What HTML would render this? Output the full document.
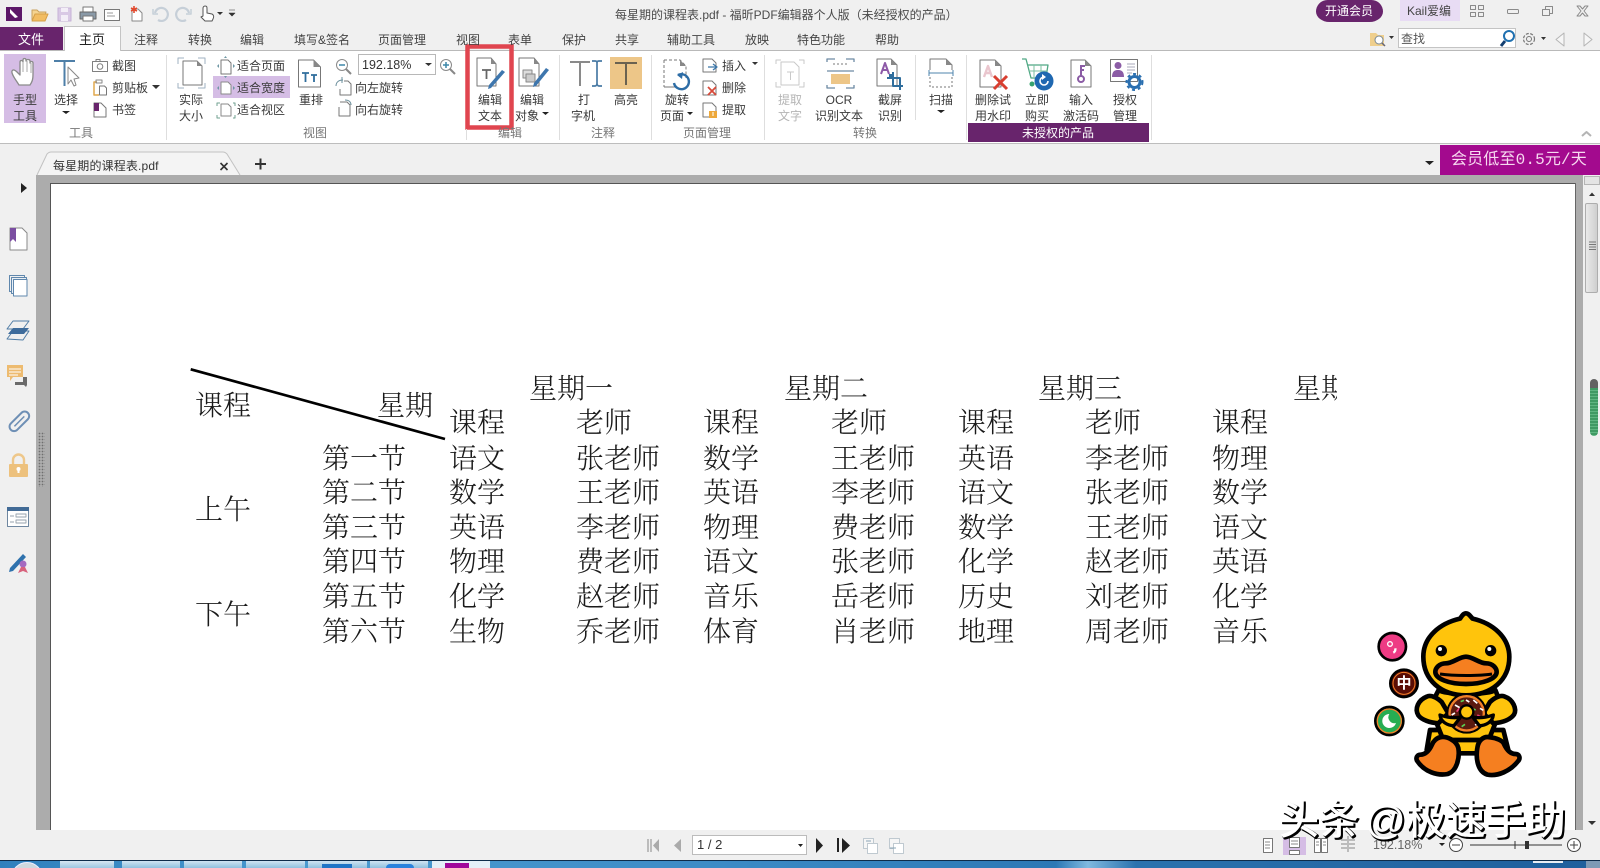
<!DOCTYPE html>
<html lang="zh"><head><meta charset="utf-8"><title>每星期的课程表.pdf - 福昕PDF编辑器个人版</title>
<style>
html,body{margin:0;padding:0;width:1600px;height:868px;overflow:hidden;background:#f0f0f0}
body{position:relative;font-family:"Liberation Sans","Noto Sans CJK SC",sans-serif;font-size:12px;color:#3a3a3a}
.b{position:absolute}
.t{position:absolute;white-space:nowrap;line-height:16px}
.c{transform:translateX(-50%)}
.g{color:#777}
.tab{font-size:12px;color:#444}
.d{position:absolute;white-space:nowrap;line-height:34px;margin-top:1px;font-family:"Liberation Serif","Noto Serif CJK SC",serif;font-size:28px;color:#1a1a1a;font-weight:300}
.m{position:absolute;white-space:nowrap;font-family:"Liberation Sans","Noto Sans CJK SC",sans-serif;font-size:40px;line-height:46px;font-weight:500;color:#fff;text-shadow:2px 2px 0 #000,1px 2px 0 #000,2px 1px 0 #000}
svg{position:absolute;left:0;top:0}
</style></head><body>

<!-- structure -->
<div class="b" style="left:0;top:27px;width:63px;height:24px;background:#68246c"></div>
<div class="b" style="left:0;top:50px;width:1600px;height:1px;background:#b9b9b9"></div>
<div class="b" style="left:64px;top:26px;width:57px;height:25px;background:#fff;border:1px solid #c4c4c4;border-bottom:0;box-sizing:border-box"></div>
<div class="b" style="left:0;top:51px;width:1600px;height:92px;background:#fff"></div>
<div class="b" style="left:0;top:143px;width:1600px;height:1px;background:#bdbdbd"></div>
<div class="b" style="left:36px;top:175px;width:1547px;height:659px;background:#acacac"></div>
<div class="b" style="left:50px;top:183px;width:1525px;height:647px;background:#fff;border-left:1px solid #555;border-top:1px solid #555;box-sizing:border-box"></div>
<div class="b" style="left:1575px;top:183px;width:1px;height:647px;background:#666"></div>
<div class="b" style="left:36px;top:830px;width:1564px;height:30px;background:#f0f0f0"></div>
<div class="b" style="left:1583px;top:175px;width:17px;height:655px;background:#f0f0f0"></div>
<div class="b" style="left:1584px;top:176px;width:16px;height:9px;background:#e4e4e4;border:1px solid #b5b5b5;box-sizing:border-box"></div>
<div class="b" style="left:1585px;top:203px;width:13px;height:90px;background:linear-gradient(90deg,#e9e9e9,#cfcfcf);border:1px solid #adadad;border-radius:2px;box-sizing:border-box"></div>
<div class="b" style="left:1590px;top:379px;width:8px;height:57px;background:repeating-linear-gradient(#3f9a63 0 2px,#5fb581 2px 3px);border-radius:4px;border-top:9px solid #626262;box-sizing:border-box"></div>
<div class="b" style="left:38px;top:432px;width:7px;height:55px;background-image:radial-gradient(#6f6f6f 35%,transparent 40%);background-size:3px 3px"></div>

<!-- highlights -->
<div class="b" style="left:4px;top:54px;width:42px;height:69px;background:#d5bde5"></div>
<div class="b" style="left:213px;top:76px;width:77px;height:22px;background:#d5bde5"></div>
<div class="b" style="left:610px;top:57px;width:32px;height:32px;background:#edc688"></div>
<div class="b" style="left:968px;top:123px;width:181px;height:19px;background:#68246c"></div>
<div class="b" style="left:358px;top:54px;width:78px;height:21px;border:1px solid #b8b8b8;box-sizing:border-box;background:#fff"></div>
<div class="b" style="left:1398px;top:28px;width:118px;height:20px;border:1px solid #c4c4c4;box-sizing:border-box;background:#fff"></div>
<div class="b" style="left:1316px;top:0;width:67px;height:22px;background:#68246c;border-radius:0 0 14px 14px/0 0 11px 11px;border-top-left-radius:12px;border-top-right-radius:12px"></div>
<div class="b" style="left:1400px;top:0;width:60px;height:21px;background:#e8dcf4"></div>
<div class="b" style="left:1440px;top:145px;width:160px;height:30px;background:#a30a8e"></div>
<div class="b" style="left:692px;top:835px;width:115px;height:20px;border:1px solid #bcbcbc;box-sizing:border-box;background:#fff"></div>
<div class="b" style="left:1283px;top:837px;width:23px;height:18px;background:#d5bde5"></div>

<!-- taskbar -->
<div class="b" style="left:0;top:860px;width:1600px;height:8px;background:linear-gradient(90deg,#2f80bd 0,#4b9bd0 20%,#3c8bc6 45%,#2c78b5 66%,#7fb9e0 68%,#2a72ae 71%,#1e5f9c 100%);border-top:1px solid #0e2c4a;box-sizing:border-box"></div>
<div class="b" style="left:60px;top:861px;width:54px;height:7px;background:linear-gradient(#d6e6f1,#9cc6e0)"></div>
<div class="b" style="left:122px;top:861px;width:58px;height:7px;background:linear-gradient(#cfe4f2,#8fc0de)"></div>
<div class="b" style="left:184px;top:861px;width:58px;height:7px;background:linear-gradient(#cfe4f2,#8fc0de)"></div>
<div class="b" style="left:246px;top:861px;width:59px;height:7px;background:linear-gradient(#cfe4f2,#8fc0de)"></div>
<div class="b" style="left:308px;top:861px;width:59px;height:7px;background:linear-gradient(#cfe4f2,#8fc0de)"></div>
<div class="b" style="left:370px;top:861px;width:58px;height:7px;background:linear-gradient(#cfe4f2,#8fc0de)"></div>
<div class="b" style="left:432px;top:861px;width:58px;height:7px;background:#e4f0f8"></div>
<div class="b" style="left:445px;top:863px;width:24px;height:5px;background:#a0089a"></div>
<div class="b" style="left:322px;top:864px;width:30px;height:4px;background:#1f74c6"></div>
<div class="b" style="left:386px;top:864px;width:28px;height:4px;background:#2a82dc;border-radius:4px 4px 0 0"></div>
<div class="b" style="left:11px;top:862px;width:30px;height:30px;border-radius:50%;background:#cfd8de;border:1px solid #eef"></div>
<div class="b" style="left:1586px;top:861px;width:14px;height:7px;background:#7d9ab5"></div>
<div class="b" style="left:1533px;top:861px;width:30px;height:2px;background:#e8eef4"></div>

<!-- icons -->
<svg width="1600" height="868" viewBox="0 0 1600 868" fill="none" stroke-linejoin="round">
<!-- quick access -->
<rect x="6" y="7" width="16" height="14" fill="#5c1768"/><path d="M10 9l8 8-3 1-5-5z" fill="#fff"/>
<path d="M32 20V10h5l2 2h7l-1 3" stroke="#c9a15c" fill="#f5d490"/><path d="M32 21l3-7h13l-3 7z" fill="#f2bd62" stroke="#d59f48"/>
<rect x="58" y="8" width="13" height="13" fill="#d9c9e5" stroke="#c6b2d6"/><rect x="61" y="8" width="7" height="4" fill="#f3eef7"/><rect x="61" y="15" width="7" height="6" fill="#f3eef7"/>
<rect x="83" y="7" width="10" height="5" fill="#fff" stroke="#777"/><rect x="80" y="12" width="16" height="7" fill="#8a9aa8" stroke="#666"/><rect x="83" y="16" width="10" height="5" fill="#fff" stroke="#777"/>
<rect x="104.500" y="9.500" width="15" height="11" fill="#fff" stroke="#777"/><path d="M107 13h6M107 16h8" stroke="#999"/>
<path d="M132 9h6l4 4v8h-10z" fill="#fff" stroke="#888"/><path d="M134 6v7M131 8l6 3M137 8l-6 3" stroke="#e2492d" stroke-width="1.600"/>
<path d="M155 13a6.500 6.500 0 1 1 3 7" stroke="#c6cfd8" stroke-width="2.200"/><path d="M153 9v5h5" stroke="#c6cfd8" stroke-width="1.500"/>
<path d="M189 13a6.500 6.500 0 1 0-3 7" stroke="#c6cfd8" stroke-width="2.200"/><path d="M191 9v5h-5" stroke="#c6cfd8" stroke-width="1.500"/>
<path d="M205 6c2 0 2 1 2 3v4l5 1c2 1 2 3 1 5l-1 2h-7l-4-4 2-1V8c0-1 1-2 2-2z" fill="#fff" stroke="#555"/>
<path d="M217 12h6l-3 3z" fill="#333"/><path d="M229 10h6M229 13h6l-3 3z" fill="#333" stroke="#333" stroke-width=".6"/>
<!-- win controls -->
<g stroke="#8a8a8a"><rect x="1470.500" y="5.500" width="5" height="4"/><rect x="1478.500" y="5.500" width="5" height="4"/><rect x="1470.500" y="12.500" width="5" height="4"/><rect x="1478.500" y="12.500" width="5" height="4"/>
<rect x="1507.500" y="9.500" width="11" height="4" rx="1"/><rect x="1545.500" y="6.500" width="7" height="7"/><rect x="1542.500" y="9.500" width="7" height="6" fill="#f0f0f0"/>
<path d="M1577 6h3l2.500 3 2.500-3h3l-4 5 4 5h-3l-2.500-3-2.500 3h-3l4-5z" fill="#f0f0f0"/></g>
<!-- search row -->
<path d="M1370 33h6l2 2h6v11h-14z" fill="#efcf8d"/><circle cx="1379" cy="40" r="4" fill="#fff" stroke="#7c8a96"/><path d="M1382 43l3 3" stroke="#667" stroke-width="1.500"/>
<path d="M1389 36h5l-2.500 3zM1541 37h5l-2.500 3z" fill="#333"/>
<circle cx="1509" cy="36" r="5" stroke="#1f70b0" stroke-width="2"/><path d="M1505 41l-4 5" stroke="#123e70" stroke-width="3"/>
<circle cx="1529" cy="39" r="5.500" stroke="#777" stroke-width="1.200" stroke-dasharray="3 1.500"/><circle cx="1529" cy="39" r="2.500" stroke="#777"/>
<path d="M1564 33l-8 6.500 8 6.500zM1584 33l8 6.500-8 6.500z" stroke="#b5b5b5" fill="#f6f6f6"/>
<!-- hand -->
<path d="M19 85c-3-5-8-11-7-14 1-2 3-1 5 1l3 3V62c0-2 3-2 3 0v-2c0-2 3-2 3 0v1c0-2 4-2 4 0v2c0-2 3-2 3 0v11c0 6-1 8-3 11z" fill="#fff" stroke="#8b8b8b" stroke-width="1.300"/>
<path d="M23 62v10M27 61v11M31 63v10" stroke="#a9a9a9"/>
<!-- select -->
<path d="M54 61h21M64.500 61v25" stroke="#4e7fa8" stroke-width="2"/><path d="M68 67l11 11-5 1 2 6-2 1-3-6-3 4z" fill="#fff" stroke="#888"/>
<!-- snip, clipboard, bookmark -->
<rect x="92.500" y="61.500" width="15" height="10" stroke="#808080"/><circle cx="100" cy="66.500" r="2.800" stroke="#808080"/><path d="M96 61v-1.500h4V61" stroke="#808080"/>
<path d="M97 82h-3v13h5" stroke="#e0a84f" stroke-width="1.500"/><rect x="96" y="80" width="6" height="3" stroke="#888"/><path d="M99.500 86h5l2 2v7h-7z" fill="#fff" stroke="#777"/>
<path d="M94 103h7l5 5v9H94z" fill="#fff" stroke="#777"/><path d="M94 103h5v8H94z" fill="#68246c"/>
<path d="M152 85h8l-4 4zM425 63h7l-3.500 3zM752 62h6l-3 3z" fill="#333"/>
<path d="M62 111h8l-4 3zM542 112h7l-3.500 3zM687 112h6l-3 3zM937 110h8l-4 3zM1425 161h9l-4.500 4zM1439 843h6l-3 3zM798 844h5l-2.500 3z" fill="#222"/>
<!-- actual size -->
<path d="M178 64v-6h6M198 58h7v6M178 83v5h6M205 83v5h-7" stroke="#9fb2c2"/><path d="M183 61h14l5 5v19h-19z" fill="#fff" stroke="#777"/><path d="M197 61l5 5h-5z" fill="#888"/>
<!-- fit -->
<g stroke="#8a8a8a" fill="#fff"><path d="M221 60h7l3 3v11h-10z" stroke="#777"/><path d="M221 82h7l3 3v9h-10z"/><path d="M221 104h7l3 3v9h-10z"/></g>
<path d="M224 58l1.500-2 1.500 2zM224 76l1.500 2 1.500-2zM219 64l-2 2 2 2zM233 64l2 2-2 2zM219 86l-2 2 2 2zM233 86l2 2-2 2z" fill="#6f98a5"/>
<path d="M217 106v-3h3M233 103h2v3M217 115v3h3M233 118h2v-3" stroke="#72a090"/>
<!-- reflow -->
<path d="M298.500 60h15l7 7v20h-22z" fill="#fff" stroke="#777"/><path d="M313.500 60l7 7h-7z" fill="#888"/><path d="M302 73h7M305.500 73v9M311 75h6M314 75v7" stroke="#2f6d9c" stroke-width="1.800"/>
<!-- zoom -->
<circle cx="342" cy="65" r="5.500" fill="#fff" stroke="#8a8a8a"/><path d="M339 65h6" stroke="#3d87a8" stroke-width="1.500"/><path d="M346 69l5 5" stroke="#888" stroke-width="2"/>
<circle cx="446" cy="65" r="5.500" fill="#fff" stroke="#8a8a8a"/><path d="M443 65h6M446 62v6" stroke="#3d87a8" stroke-width="1.500"/><path d="M450 69l5 5" stroke="#888" stroke-width="2"/>
<!-- rotate -->
<path d="M344 81h4l3 3v11h-11v-6" fill="#fff" stroke="#777"/><path d="M336 86c0-4 3-6 7-6" stroke="#6b8f9c"/><path d="M342 77v6" stroke="#6b8f9c"/>
<path d="M340 102h7l3 3v11h-11v-9" fill="#fff" stroke="#777"/><path d="M351 105c0-3-2-5-6-5" stroke="#6b8f9c"/>
<!-- edit text -->
<path d="M477 58h14l5 6v22h-19z" fill="#fff" stroke="#777"/><path d="M491 58l5 6h-5z" fill="#888"/><path d="M482 70h9M486.500 70v9" stroke="#666" stroke-width="1.800"/>
<path d="M505 72l-14 16-3 1 1-4 13-15z" fill="#3e76ad"/>
<rect x="467.500" y="46.500" width="44" height="81" stroke="#e0454f" stroke-width="4.500" stroke-linejoin="miter"/>
<!-- edit object -->
<path d="M519 58h15l5 6v22h-20z" fill="#fff" stroke="#777"/><path d="M534 58l5 6h-5z" fill="#888"/><rect x="523" y="70" width="9" height="8" fill="#ddd" stroke="#888"/><rect x="526" y="74" width="9" height="8" fill="#ccc" stroke="#888"/>
<path d="M549 70l-13 16-3 1 1-4 12-15z" fill="#3e76ad"/>
<!-- typewriter -->
<path d="M570 62h20M580 62v24" stroke="#8a8a8a" stroke-width="2"/><path d="M592 61h3c1 0 2 0 2 2v20c0 2-1 3-2 3h-3M602 61h-3c-1 0-2 0-2 2v20c0 2 1 3 2 3h3" stroke="#4a7ba5" stroke-width="1.700"/>
<path d="M615 63h22M626 63v22" stroke="#6a6250" stroke-width="2"/>
<!-- rotate page -->
<path d="M664 60h16l6 6v12M677 87h-13z" stroke="#777" stroke-dasharray="3 2"/><path d="M664 60v27" stroke="#777" stroke-dasharray="3 2"/><path d="M680 60l6 6h-6z" fill="#888"/>
<path d="M678 75a7.500 7.500 0 1 1-4 8" stroke="#2d6da6" stroke-width="2.400"/><path d="M683 72l-6 3 5 4z" fill="#2d6da6"/>
<!-- page mgmt small -->
<path d="M703 59h9l4 4v9h-13z" fill="#fff" stroke="#777"/><path d="M708 67h9M713 64l4 3-4 3" stroke="#3b76a8" stroke-width="1.300"/>
<path d="M703 81h9l4 4v10h-13z" fill="#fff" stroke="#777"/><path d="M708 87l8 8M716 87l-8 8" stroke="#d84a3a" stroke-width="1.800"/>
<path d="M703 103h9l4 4v10h-13z" fill="#fff" stroke="#777"/><rect x="709" y="111" width="8" height="7" fill="#eda83b"/><path d="M713 112v4" stroke="#fff"/>
<!-- extract text -->
<g stroke="#c9c9c9"><path d="M776 64v-4h5M799 60h5v4M776 82v5h5M804 82v5h-5"/><path d="M781 62h13l5 5v18h-18z" fill="#fff"/><path d="M787 72h7M790.500 72v8"/></g>
<!-- OCR -->
<path d="M827 62v-3h8M846 59h8v3M827 85v3h8M846 88h8v-3" stroke="#6d8aa3" stroke-width="1.300"/><path d="M833 64h16" stroke="#777" stroke-dasharray="2 2"/><path d="M827 71h27" stroke="#6d8aa3" stroke-width="1.300"/><rect x="831" y="74" width="19" height="10" fill="#edc688"/>
<!-- screenshot OCR -->
<path d="M877 59h14l6 6v21h-20z" fill="#fff" stroke="#777"/><path d="M891 59l6 6h-6z" fill="#888"/><path d="M881 74l4-11 4 11M882.500 70h5" stroke="#8d5aa7" stroke-width="2"/>
<path d="M893 72v14h10M887 78h13v12" stroke="#2f6d9c" stroke-width="2"/><rect x="889" y="74" width="4" height="4" fill="#2f6d9c"/>
<!-- scan -->
<path d="M930 70V59h16l6 6v5" stroke="#777"/><path d="M946 59l6 6h-6z" fill="#888"/><path d="M929 73h24M929 70v6M953 70v6" stroke="#4f84ad"/><path d="M930 77v10h22V77" stroke="#777" stroke-dasharray="2 2"/>
<!-- delete watermark -->
<path d="M980 60h15l6 6v21h-21z" fill="#fff" stroke="#777"/><path d="M995 60l6 6h-6z" fill="#888"/><path d="M984 77l4-11 4 11M985 73h6" stroke="#eac6ce" stroke-width="2.400"/><path d="M994 76l13 13M1007 76l-13 13" stroke="#d83e30" stroke-width="3"/>
<!-- cart -->
<path d="M1022 59h4l5 19h17M1028 65h20l-2 12" stroke="#4fa884" stroke-width="1.300"/><path d="M1034 65v12M1041 65v12M1029 71h18" stroke="#7cc0a1"/><circle cx="1032" cy="84" r="2.500" fill="#36a26f"/>
<circle cx="1044" cy="81" r="9.500" fill="#1f68b1"/><path d="M1048 81a4 4 0 1 1-4-4" stroke="#fff" stroke-width="1.600"/><path d="M1042 74v6l4-3z" fill="#fff"/>
<!-- key -->
<path d="M1071 60h14l6 6v21h-20z" fill="#fff" stroke="#777"/><path d="M1085 60l6 6h-6z" fill="#888"/><circle cx="1081" cy="79" r="3" stroke="#8b5ca5" stroke-width="2"/><path d="M1081 76V65M1081 66h4M1081 70h3" stroke="#8b5ca5" stroke-width="2"/>
<!-- license -->
<rect x="1110.500" y="59.500" width="27" height="22" fill="#fff" stroke="#777"/><circle cx="1118" cy="65.500" r="3.500" fill="#8b5ca5"/><path d="M1112 77c0-6 3-7 6-7s6 1 6 7z" fill="#8b5ca5"/><path d="M1127 64h8M1127 67h8M1127 70h8M1127 73h5" stroke="#aab"/>
<circle cx="1134.500" cy="82" r="5.500" stroke="#2a6fb0" stroke-width="3"/><circle cx="1134.500" cy="82" r="8" stroke="#2a6fb0" stroke-width="2" stroke-dasharray="3 3"/>
<!-- separators -->
<path d="M166.500 55v85M466.500 129v11M559.500 55v85M651.500 55v85M764.500 55v85M915.500 55v65M966.500 55v85M1151.500 55v85" stroke="#dedede"/>
<path d="M1582 136l4.500-4 4.500 4" stroke="#b4b4b4" stroke-width="2"/>
<!-- tab -->
<path d="M37 175l10-21c1-1 2-2 4-2h172c2 0 3 1 4 2l13 21" fill="#f4f4f4" stroke="#c2c2c2"/>
<path d="M220.500 163l7 7M227.500 163l-7 7" stroke="#333" stroke-width="1.600"/>
<path d="M255 164h11M260.500 158.500v11" stroke="#333" stroke-width="2"/>
<!-- sidebar -->
<path d="M21 183l6 5-6 5z" fill="#222"/>
<path d="M10 228h12l5 5v17H10z" fill="#fff" stroke="#8a8a8a"/><path d="M10 228h6v14l-3-3-3 3z" fill="#7b4ea1"/>
<rect x="9.500" y="275.500" width="15" height="16" stroke="#5f87ad"/><rect x="11.500" y="277.500" width="15" height="16" fill="#e9eff5" stroke="#5f87ad"/><rect x="13.500" y="279.500" width="13.500" height="16.500" fill="#fff" stroke="#5f87ad"/>
<path d="M7 339l6-8h16l-6 9z" stroke="#517da6"/><path d="M7 329l6-8h16l-6 8z" stroke="#517da6"/><path d="M13 328h16l-5 6H8z" fill="#3e6c9c"/>
<path d="M7 365h16v12H13l-3 4v-4H7z" fill="#edbb70"/><path d="M9 369h12M9 372h12M9 375h9" stroke="#fff"/><path d="M15 382h8v-5h4v8l-1 2-2-2H15z" fill="#6a6a6a"/>
<g transform="rotate(-45 19 421)"><rect x="7" y="417" width="24" height="9" rx="4.500" stroke="#6e8fb5" stroke-width="2"/><path d="M12 421.500h14" stroke="#6e8fb5" stroke-width="1.500"/></g>
<path d="M13 465v-5a5.500 5.500 0 0 1 11 0v5" stroke="#eec78a" stroke-width="2.400"/><rect x="9" y="464" width="19" height="13" rx="1" fill="#edc17d"/><circle cx="18.500" cy="469" r="2" fill="#fff"/><path d="M17.500 470h2v3h-2z" fill="#fff"/>
<rect x="7.500" y="507.500" width="21" height="19" fill="#fff" stroke="#6f87a0"/><rect x="7" y="507" width="22" height="4" fill="#426b96"/><path d="M10 516h4M16 514h10v3H16zM10 522h4M16 520h10v3H16z" stroke="#96a2ac" stroke-width=".9"/>
<path d="M9 572l1-4 13-14 3 3-13 14z" fill="#2f72ad"/><circle cx="23" cy="564" r="3.500" fill="#a56ac0"/><path d="M18 573l3-6h4l3 6-5-2z" fill="#d8627c"/>
<!-- scrollbar -->
<path d="M1589 196l3-3.500 3 3.500z" fill="#333"/><path d="M1588 821h8l-4 4z" fill="#333"/>
<path d="M1589 242h7M1589 244.500h7M1589 247h7M1589 249.500h7" stroke="#777"/>
<!-- diagonal -->
<path d="M190.700 369.300L445 439" stroke="#000" stroke-width="2.700"/>
<!-- page nav -->
<path d="M648 839v13M651 839v13" stroke="#aaa" stroke-width="1.500"/><path d="M659 839l-6 6.500 6 6.500z" fill="#aaa"/><path d="M681 839l-7 6.500 7 6.500z" fill="#aaa"/>
<path d="M816 838l7 7.500-7 7.500z" fill="#222"/><path d="M838 838v14" stroke="#222" stroke-width="2"/><path d="M842 838l8 7.500-8 7.500z" fill="#222"/>
<rect x="863.500" y="838.500" width="10" height="10" stroke="#bfc9d0" fill="#f6f6f6"/><rect x="867.500" y="843.500" width="10" height="10" stroke="#bfc9d0" fill="#fff"/><path d="M866 841h5" stroke="#8aa4b5"/>
<rect x="889.500" y="838.500" width="10" height="10" stroke="#bfc9d0" fill="#f6f6f6"/><rect x="893.500" y="843.500" width="10" height="10" stroke="#bfc9d0" fill="#fff"/><path d="M890 848h6" stroke="#8aa4b5"/>
<!-- view -->
<g stroke="#777" fill="#fff"><rect x="1263.500" y="838.500" width="9" height="14"/><rect x="1289.500" y="837.500" width="10" height="10"/><rect x="1289.500" y="850.500" width="10" height="4"/><rect x="1314.500" y="838.500" width="6" height="14"/><rect x="1321.500" y="838.500" width="6" height="14"/></g>
<path d="M1265 842h5M1265 845h5M1265 848h5M1291 841h7M1291 844h7M1316 842h3M1316 845h3M1323 842h3M1323 845h3" stroke="#888"/>
<path d="M1341 840h6M1349 840h6M1341 844h6M1349 844h6M1341 848h6M1349 848h6M1348 836v16" stroke="#888"/>
<!-- zoom slider -->
<circle cx="1456" cy="845" r="6.500" fill="#fff" stroke="#444"/><path d="M1452 845h8" stroke="#444"/><path d="M1470 845h92" stroke="#333"/><path d="M1515 841v8" stroke="#333"/><rect x="1525" y="841" width="4" height="8" fill="#333"/>
<circle cx="1574" cy="845" r="6.500" fill="#fff" stroke="#444"/><path d="M1570 845h8M1574 841v8" stroke="#444"/>
<!-- duck -->
<g transform="translate(1340,600) scale(.3333)" stroke="#000" stroke-width="14">
<circle cx="157" cy="140" r="41" fill="#ee3b84" stroke-width="8"/><circle cx="192" cy="250" r="41" fill="#5a0d05" stroke-width="8"/><circle cx="192" cy="250" r="33" stroke="#f2802a" stroke-width="3" fill="none"/>
<circle cx="148" cy="363" r="42" fill="#26ad52" stroke-width="8"/><circle cx="148" cy="363" r="36" fill="none" stroke="#f2802a" stroke-width="4"/>
<path d="M148 342a21 21 0 1 0 20 27a18 18 0 0 1-20-27z" fill="#fff" stroke="none"/>
<circle cx="150" cy="132" r="7" fill="none" stroke="#fff" stroke-width="4"/><path d="M166 145c1 8-2 11-6 13" stroke="#fff" stroke-width="7" fill="none"/>
<path d="M270 390h220l15 60-50 0 -30 10h-90l-30-10h-45z" fill="#ffc40c"/>
<path d="M296 270c20 15 150 15 170 0l20 50-40 100H310l-40-100z" fill="#ffc40c"/>
<path d="M378 40c8 0 12 8 20 16 60 14 110 55 110 115 0 70-55 115-130 115S250 240 250 170c0-60 50-100 110-114 6-8 10-16 18-16z" fill="#ffc40c"/>
<path d="M378 170c20 0 40 20 60 20 20 0 32 14 32 26 0 20-40 36-92 36s-92-16-92-36c0-12 12-26 32-26 20 0 40-20 60-20z" fill="#f57f20"/>
<path d="M300 222c40 6 120 6 156 0" stroke-width="9" fill="none"/>
<circle cx="304" cy="152" r="17" fill="#000" stroke="none"/><circle cx="452" cy="152" r="17" fill="#000" stroke="none"/><circle cx="300" cy="147" r="6" fill="#fff" stroke="none"/><circle cx="448" cy="147" r="6" fill="#fff" stroke="none"/>
<path d="M260 290c12-6 30 2 45 16l20 34 -30 30c-25-2-50-10-60-24-12-20 0-46 25-56z" fill="#ffc40c"/>
<path d="M495 290c-12-6-30 2-45 16l-20 34 30 30c25-2 50-10 62-26 10-18-4-46-27-54z" fill="#ffc40c"/>
<circle cx="380" cy="340" r="58" fill="#f2802a" stroke-width="6"/><circle cx="380" cy="340" r="48" fill="#5a1a10" stroke="none"/>
<path d="M345 315l14 8M400 300l12 10M420 325l10 6M345 370l10-8M405 375l12-5M378 300l10 6M335 345l10-6" stroke="#fff" stroke-width="5"/><path d="M362 305l10-4M395 325l12 5M365 380l10-7" stroke="#5ccf55" stroke-width="5"/><path d="M350 335l8-10M412 345l10 6" stroke="#ed3a7a" stroke-width="5"/>
<path d="M315 360c-14-8-40-12-62-14M445 360c14-8 40-12 62-14" stroke="#000" stroke-width="0"/>
<path d="M300 345c20 8 45 10 62 6l-20 26c-20 0-40-12-42-32zM460 345c-20 8-45 10-62 6l20 26c20 0 40-12 42-32z" fill="#ffc40c" stroke-width="10"/>
<circle cx="380" cy="336" r="20" fill="#ffc40c" stroke-width="7"/>
<path d="M300 412c20-5 50 10 55 32 5 30 -5 70-32 78-30 6-70-6-92-40-4-8 0-18 10-18 12 0 25-8 35-30 4-10 14-20 24-22z" fill="#f57f20"/>
<path d="M450 412c-20-5-35 10-38 32-5 30 0 70 30 80 30 6 70-10 95-44 4-8 0-18-10-18-12 0-25-8-35-30-4-10-22-18-42-20z" fill="#f57f20"/>
</g>
</svg>

<!-- Title / tabs -->
<span class="t" style="left:615px;top:7px;color:#4a4a4a;font-size:12px">每星期的课程表.pdf - 福昕PDF编辑器个人版（未经授权的产品）</span>
<span class="t c" style="left:31px;top:32px;color:#fff;font-size:13px">文件</span>
<span class="t c" style="left:92px;top:32px;color:#222;font-size:13px">主页</span>
<span class="t c tab" style="left:146px;top:32px">注释</span>
<span class="t c tab" style="left:200px;top:32px">转换</span>
<span class="t c tab" style="left:252px;top:32px">编辑</span>
<span class="t c tab" style="left:322px;top:32px">填写&amp;签名</span>
<span class="t c tab" style="left:402px;top:32px">页面管理</span>
<span class="t c tab" style="left:468px;top:32px">视图</span>
<span class="t c tab" style="left:520px;top:32px">表单</span>
<span class="t c tab" style="left:574px;top:32px">保护</span>
<span class="t c tab" style="left:627px;top:32px">共享</span>
<span class="t c tab" style="left:691px;top:32px">辅助工具</span>
<span class="t c tab" style="left:757px;top:32px">放映</span>
<span class="t c tab" style="left:821px;top:32px">特色功能</span>
<span class="t c tab" style="left:887px;top:32px">帮助</span>
<span class="t c" style="left:1349px;top:3px;color:#fff">开通会员</span>
<span class="t c" style="left:1429px;top:3px;color:#444">Kail爱编</span>
<span class="t" style="left:1401px;top:31px;color:#555">查找</span>

<!-- Ribbon text -->
<span class="t c" style="left:25px;top:92px">手型</span><span class="t c" style="left:25px;top:108px">工具</span>
<span class="t c" style="left:66px;top:92px">选择</span>
<span class="t" style="left:112px;top:58px">截图</span><span class="t" style="left:112px;top:80px">剪贴板</span><span class="t" style="left:112px;top:102px">书签</span>
<span class="t c g" style="left:81px;top:125px">工具</span>
<span class="t c" style="left:191px;top:92px">实际</span><span class="t c" style="left:191px;top:108px">大小</span>
<span class="t" style="left:237px;top:58px">适合页面</span><span class="t" style="left:237px;top:80px">适合宽度</span><span class="t" style="left:237px;top:102px">适合视区</span>
<span class="t c" style="left:311px;top:92px">重排</span>
<span class="t" style="left:362px;top:57px;font-size:12.500px;color:#333">192.18%</span>
<span class="t" style="left:355px;top:80px">向左旋转</span><span class="t" style="left:355px;top:102px">向右旋转</span>
<span class="t c g" style="left:315px;top:125px">视图</span>
<span class="t c" style="left:490px;top:92px">编辑</span><span class="t c" style="left:490px;top:108px">文本</span>
<span class="t c" style="left:532px;top:92px">编辑</span><span class="t" style="left:515px;top:108px">对象</span>
<span class="t c g" style="left:510px;top:125px">编辑</span>
<span class="t c" style="left:584px;top:92px">打</span><span class="t c" style="left:583px;top:108px">字机</span>
<span class="t c" style="left:626px;top:92px">高亮</span>
<span class="t c g" style="left:603px;top:125px">注释</span>
<span class="t c" style="left:677px;top:92px">旋转</span><span class="t" style="left:660px;top:108px">页面</span>
<span class="t" style="left:722px;top:58px">插入</span><span class="t" style="left:722px;top:80px">删除</span><span class="t" style="left:722px;top:102px">提取</span>
<span class="t c g" style="left:707px;top:125px">页面管理</span>
<span class="t c" style="left:790px;top:92px;color:#b5b5b5">提取</span><span class="t c" style="left:790px;top:108px;color:#b5b5b5">文字</span>
<span class="t c" style="left:839px;top:92px">OCR</span><span class="t c" style="left:839px;top:108px">识别文本</span>
<span class="t c" style="left:890px;top:92px">截屏</span><span class="t c" style="left:890px;top:108px">识别</span>
<span class="t c g" style="left:865px;top:125px">转换</span>
<span class="t c" style="left:941px;top:92px">扫描</span>
<span class="t c" style="left:993px;top:92px">删除试</span><span class="t c" style="left:993px;top:108px">用水印</span>
<span class="t c" style="left:1037px;top:92px">立即</span><span class="t c" style="left:1037px;top:108px">购买</span>
<span class="t c" style="left:1081px;top:92px">输入</span><span class="t c" style="left:1081px;top:108px">激活码</span>
<span class="t c" style="left:1125px;top:92px">授权</span><span class="t c" style="left:1125px;top:108px">管理</span>
<span class="t c" style="left:1058px;top:125px;color:#fff">未授权的产品</span>

<!-- Tab strip -->
<span class="t" style="left:53px;top:158px;color:#333;letter-spacing:.15px">每星期的课程表.pdf</span>
<span class="t" style="left:1451px;top:152px;color:#f7d9f0;font-size:16px;letter-spacing:.15px;font-family:'Liberation Mono','Noto Sans CJK SC',monospace">会员低至0.5元/天</span>

<!-- Status bar text -->
<span class="t" style="left:697px;top:837px;color:#333;font-size:13px">1 / 2</span>
<span class="t" style="left:1373px;top:837px;color:#666;font-size:12.500px">192.18%</span>

<!-- Document -->
<span class="d" style="left:529px;top:372px">星期一</span>
<span class="d" style="left:784px;top:372px">星期二</span>
<span class="d" style="left:1038px;top:372px">星期三</span>
<div class="b" style="left:1290px;top:372px;width:47px;height:36px;overflow:hidden"><span class="d" style="left:3px;top:0">星期四</span></div>
<span class="d" style="left:195px;top:389px">课程</span><span class="d" style="left:377px;top:389px">星期</span>
<span class="d" style="left:449px;top:406px">课程</span><span class="d" style="left:576px;top:406px">老师</span><span class="d" style="left:703px;top:406px">课程</span><span class="d" style="left:831px;top:406px">老师</span><span class="d" style="left:958px;top:406px">课程</span><span class="d" style="left:1085px;top:406px">老师</span><span class="d" style="left:1212px;top:406px">课程</span>

<span class="d" style="left:322px;top:442px">第一节</span><span class="d" style="left:449px;top:442px">语文</span><span class="d" style="left:576px;top:442px">张老师</span><span class="d" style="left:703px;top:442px">数学</span><span class="d" style="left:831px;top:442px">王老师</span><span class="d" style="left:958px;top:442px">英语</span><span class="d" style="left:1085px;top:442px">李老师</span><span class="d" style="left:1212px;top:442px">物理</span>
<span class="d" style="left:322px;top:476px">第二节</span><span class="d" style="left:449px;top:476px">数学</span><span class="d" style="left:576px;top:476px">王老师</span><span class="d" style="left:703px;top:476px">英语</span><span class="d" style="left:831px;top:476px">李老师</span><span class="d" style="left:958px;top:476px">语文</span><span class="d" style="left:1085px;top:476px">张老师</span><span class="d" style="left:1212px;top:476px">数学</span>
<span class="d" style="left:322px;top:511px">第三节</span><span class="d" style="left:449px;top:511px">英语</span><span class="d" style="left:576px;top:511px">李老师</span><span class="d" style="left:703px;top:511px">物理</span><span class="d" style="left:831px;top:511px">费老师</span><span class="d" style="left:958px;top:511px">数学</span><span class="d" style="left:1085px;top:511px">王老师</span><span class="d" style="left:1212px;top:511px">语文</span>
<span class="d" style="left:322px;top:545px">第四节</span><span class="d" style="left:449px;top:545px">物理</span><span class="d" style="left:576px;top:545px">费老师</span><span class="d" style="left:703px;top:545px">语文</span><span class="d" style="left:831px;top:545px">张老师</span><span class="d" style="left:958px;top:545px">化学</span><span class="d" style="left:1085px;top:545px">赵老师</span><span class="d" style="left:1212px;top:545px">英语</span>
<span class="d" style="left:322px;top:580px">第五节</span><span class="d" style="left:449px;top:580px">化学</span><span class="d" style="left:576px;top:580px">赵老师</span><span class="d" style="left:703px;top:580px">音乐</span><span class="d" style="left:831px;top:580px">岳老师</span><span class="d" style="left:958px;top:580px">历史</span><span class="d" style="left:1085px;top:580px">刘老师</span><span class="d" style="left:1212px;top:580px">化学</span>
<span class="d" style="left:322px;top:615px">第六节</span><span class="d" style="left:449px;top:615px">生物</span><span class="d" style="left:576px;top:615px">乔老师</span><span class="d" style="left:703px;top:615px">体育</span><span class="d" style="left:831px;top:615px">肖老师</span><span class="d" style="left:958px;top:615px">地理</span><span class="d" style="left:1085px;top:615px">周老师</span><span class="d" style="left:1212px;top:615px">音乐</span>
<span class="d" style="left:195px;top:493px">上午</span><span class="d" style="left:195px;top:598px">下午</span>

<span class="t c" style="left:1404px;top:676px;color:#fff;font-size:15px;font-weight:700">中</span>

<!-- watermark -->
<span class="m" style="left:1279px;top:798px;word-spacing:-5px">头条 @极速手助</span>
</body></html>
